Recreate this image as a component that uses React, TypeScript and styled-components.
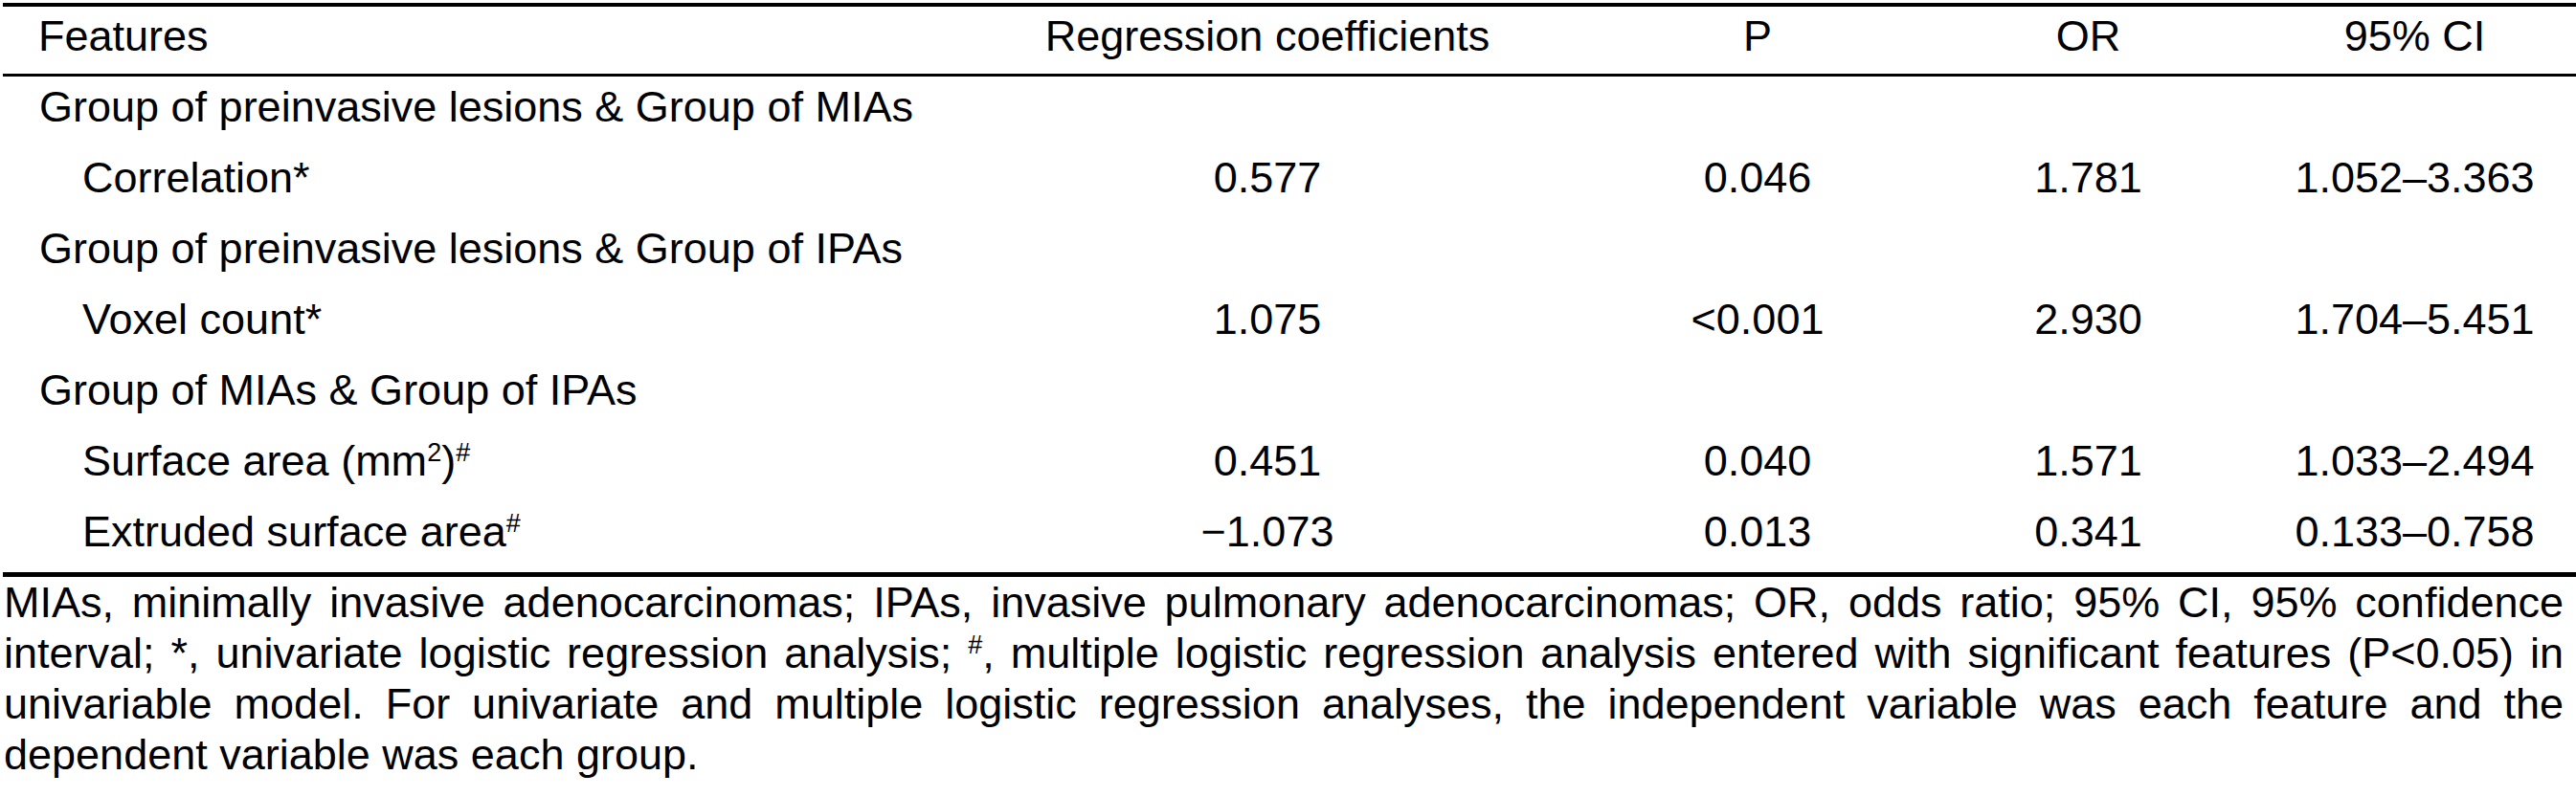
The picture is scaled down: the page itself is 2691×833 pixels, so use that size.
import React from "react";
import styled, { createGlobalStyle } from "styled-components";

const GlobalStyle = createGlobalStyle`
  html, body {
    margin: 0;
    padding: 0;
    background: #ffffff;
  }
  body {
    font-family: "Liberation Sans", Arial, Helvetica, sans-serif;
    color: #000000;
  }
`;

const Page = styled.main`
  width: 2691px;
  box-sizing: border-box;
  padding: 3px 0 0 3px;
`;

const Table = styled.table`
  width: 2688px;
  table-layout: fixed;
  border-collapse: separate;
  border-spacing: 0;
  font-size: 45px;
  line-height: 53px;
`;

const HeadCell = styled.th<{ $align?: "left" | "center" }>`
  box-sizing: border-box;
  height: 77px;
  padding: 4px 0 13px ${(p) => (p.$align === "left" ? "37px" : "0")};
  border-top: 4px solid #000;
  border-bottom: 3px solid #000;
  font-weight: normal;
  text-align: ${(p) => p.$align ?? "center"};
  vertical-align: top;
  white-space: nowrap;
`;

const Row = styled.tr<{ $last?: boolean }>`
  & > td {
    border-bottom: ${(p) => (p.$last ? "5px solid #000" : "0")};
  }
`;

const LabelCell = styled.td<{ $indent?: boolean }>`
  box-sizing: border-box;
  height: 74px;
  padding: 5px 0 16px ${(p) => (p.$indent ? "83px" : "38px")};
  text-align: left;
  vertical-align: top;
  white-space: nowrap;
`;

const ValueCell = styled.td`
  box-sizing: border-box;
  height: 74px;
  padding: 5px 0 16px 0;
  text-align: center;
  vertical-align: top;
  white-space: nowrap;
`;

const Sup = styled.sup`
  font-size: 27px;
  line-height: 0;
  vertical-align: 15px;
`;

const Note = styled.div`
  display: flex;
  flex-direction: column;
  margin: 0 13px 0 1px;
  font-size: 45px;
  line-height: 53px;
`;

const NoteLine = styled.p<{ $justify?: boolean }>`
  margin: 0;
  white-space: nowrap;
  text-align: ${(p) => (p.$justify ? "justify" : "left")};
  text-align-last: ${(p) => (p.$justify ? "justify" : "left")};
`;

type GroupRow = { kind: "group"; label: string };
type ItemRow = {
  kind: "item";
  label: React.ReactNode;
  values: [string, string, string, string];
};

const rows: (GroupRow | ItemRow)[] = [
  { kind: "group", label: "Group of preinvasive lesions & Group of MIAs" },
  {
    kind: "item",
    label: "Correlation*",
    values: ["0.577", "0.046", "1.781", "1.052–3.363"],
  },
  { kind: "group", label: "Group of preinvasive lesions & Group of IPAs" },
  {
    kind: "item",
    label: "Voxel count*",
    values: ["1.075", "<0.001", "2.930", "1.704–5.451"],
  },
  { kind: "group", label: "Group of MIAs & Group of IPAs" },
  {
    kind: "item",
    label: (
      <>
        Surface area (mm<Sup>2</Sup>)<Sup>#</Sup>
      </>
    ),
    values: ["0.451", "0.040", "1.571", "1.033–2.494"],
  },
  {
    kind: "item",
    label: (
      <>
        Extruded surface area<Sup>#</Sup>
      </>
    ),
    values: ["−1.073", "0.013", "0.341", "0.133–0.758"],
  },
];

export default function App() {
  return (
    <Page>
      <GlobalStyle />
      <Table>
        <colgroup>
          <col style={{ width: 982 }} />
          <col style={{ width: 678 }} />
          <col style={{ width: 346 }} />
          <col style={{ width: 345 }} />
          <col style={{ width: 337 }} />
        </colgroup>
        <thead>
          <tr>
            <HeadCell $align="left">Features</HeadCell>
            <HeadCell>Regression coefficients</HeadCell>
            <HeadCell>P</HeadCell>
            <HeadCell>OR</HeadCell>
            <HeadCell>95% CI</HeadCell>
          </tr>
        </thead>
        <tbody>
          {rows.map((r, i) => (
            <Row key={i} $last={i === rows.length - 1}>
              {r.kind === "group" ? (
                <LabelCell colSpan={5}>{r.label}</LabelCell>
              ) : (
                <>
                  <LabelCell $indent>{r.label}</LabelCell>
                  {r.values.map((v, j) => (
                    <ValueCell key={j}>{v}</ValueCell>
                  ))}
                </>
              )}
            </Row>
          ))}
        </tbody>
      </Table>
      <Note>
        <NoteLine $justify>
          MIAs, minimally invasive adenocarcinomas; IPAs, invasive pulmonary
          adenocarcinomas; OR, odds ratio; 95% CI, 95% confidence
        </NoteLine>
        <NoteLine $justify>
          interval; *, univariate logistic regression analysis; <Sup>#</Sup>,
          multiple logistic regression analysis entered with significant
          features (P&lt;0.05) in
        </NoteLine>
        <NoteLine $justify>
          univariable model. For univariate and multiple logistic regression
          analyses, the independent variable was each feature and the
        </NoteLine>
        <NoteLine>dependent variable was each group.</NoteLine>
      </Note>
    </Page>
  );
}
